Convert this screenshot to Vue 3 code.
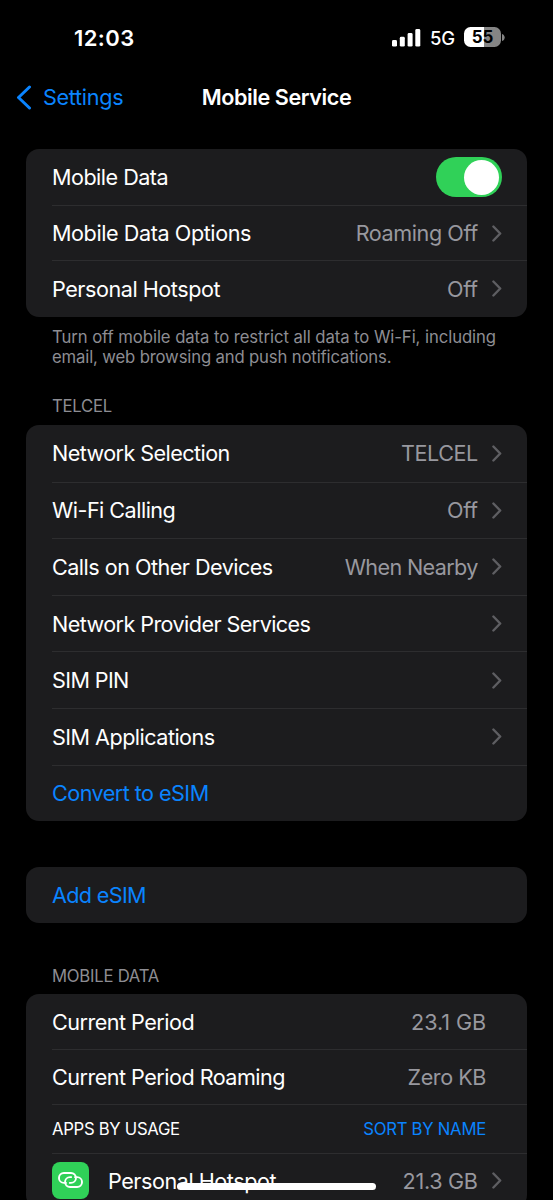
<script setup>
const groups = [
  {
    id: 'data',
    rows: [
      { label: 'Mobile Data', toggle: true, h: 56 },
      { label: 'Mobile Data Options', tracking: -0.42, value: 'Roaming Off', valueTracking: -0.43, chevron: true, h: 55 },
      { label: 'Personal Hotspot', tracking: -0.46, value: 'Off', chevron: true, h: 56.5 },
    ],
    footer: [
      { text: 'Turn off mobile data to restrict all data to Wi-Fi, including', tracking: -0.07 },
      { text: 'email, web browsing and push notifications.', tracking: -0.15 },
    ],
  },
  {
    id: 'carrier',
    header: 'TELCEL',
    rows: [
      { label: 'Network Selection', tracking: -0.57, value: 'TELCEL', valueTracking: -0.48, chevron: true },
      { label: 'Wi-Fi Calling', value: 'Off', chevron: true },
      { label: 'Calls on Other Devices', value: 'When Nearby', valueTracking: -0.64, chevron: true },
      { label: 'Network Provider Services', tracking: -0.58, chevron: true },
      { label: 'SIM PIN', tracking: -0.62, chevron: true },
      { label: 'SIM Applications', tracking: -0.53, chevron: true },
      { label: 'Convert to eSIM', tracking: -0.54, link: true },
    ],
  },
  { id: 'add', rows: [{ label: 'Add eSIM', tracking: -0.65, link: true, h: 56 }] },
  {
    id: 'usage',
    header: 'MOBILE DATA',
    rows: [
      { label: 'Current Period', value: '23.1 GB', valueTracking: -0.08, h: 55 },
      { label: 'Current Period Roaming', value: 'Zero KB', valueTracking: -0.45, h: 55 },
      { label: 'APPS BY USAGE', tracking: -0.3, action: 'SORT BY NAME', small: true, h: 48.7 },
      { label: 'Personal Hotspot', tracking: -0.46, value: '21.3 GB', chevron: true, icon: true, h: 55.2 },
    ],
  },
]
</script>

<template>
  <div class="screen">
    <header class="status">
      <span class="time">12:03</span>
      <div class="indicators">
        <svg class="signal" width="29" height="18" viewBox="0 0 29 18">
          <rect x="0" y="11" width="5" height="6.6" rx="1.4" />
          <rect x="7.8" y="7.8" width="5" height="9.8" rx="1.4" />
          <rect x="15.6" y="4" width="5" height="13.6" rx="1.4" />
          <rect x="23.3" y="0" width="5" height="17.6" rx="1.4" />
        </svg>
        <span class="network">5G</span>
        <div class="battery"><span>55</span></div>
        <svg class="cap" width="3" height="7" viewBox="0 0 3 7"><path d="M0 0C3.6 1 3.6 6 0 7Z" /></svg>
      </div>
    </header>

    <nav class="nav">
      <div class="back">
        <svg width="16" height="25" viewBox="0 0 16 25"><path d="M13.5 2 2.5 12.5 13.5 23" /></svg>
        <span>Settings</span>
      </div>
      <h1>Mobile Service</h1>
    </nav>

    <section v-for="g in groups" :key="g.id" :class="['group', g.id]">
      <h2 v-if="g.header">{{ g.header }}</h2>
      <div class="card">
        <div
          v-for="r in g.rows"
          :key="r.label"
          :class="['row', { small: r.small, plain: !r.chevron && (r.value || r.action) }]"
          :style="{ height: (r.h || 56.62) + 'px' }"
        >
          <span v-if="r.icon" class="icon">
            <svg width="25" height="16" viewBox="0 0 25 16">
              <path d="M8 10.9H5.9a4.95 4.95 0 0 1 0-9.9H13a4.95 4.95 0 0 1 0 9.9h-1.2" />
              <path d="M17 5.1h2.1a4.95 4.95 0 0 1 0 9.9H12a4.95 4.95 0 0 1 0-9.9h1.2" />
            </svg>
          </span>
          <span :class="['label', { link: r.link }]" :style="{ letterSpacing: (r.tracking ?? -0.52) + 'px' }">{{ r.label }}</span>
          <span v-if="r.value" class="value" :style="{ letterSpacing: (r.valueTracking ?? -0.3) + 'px' }">{{ r.value }}</span>
          <span v-if="r.action" class="link action">{{ r.action }}</span>
          <span v-if="r.toggle" class="toggle"><i></i></span>
          <svg v-if="r.chevron" class="chevron" width="10" height="17" viewBox="0 0 10 17">
            <path d="M1.4 1.5 8.2 8.5 1.4 15.5" />
          </svg>
        </div>
      </div>
      <p v-if="g.footer">
        <span v-for="line in g.footer" :key="line.text" :style="{ letterSpacing: line.tracking + 'px' }">{{ line.text }}</span>
      </p>
    </section>
    <div class="home-bar"></div>
  </div>
</template>

<style>
body { background: #000; }
</style>

<style scoped>
.screen {
  position: relative;
  width: 553px;
  height: 1200px;
  overflow: hidden;
  box-sizing: border-box;
  background: #000;
  color: #fff;
  font-family: Inter, "Liberation Sans", sans-serif;
  font-size: 21.6px;
  letter-spacing: -0.3px;
}
.status {
  height: 75px;
  display: flex;
  align-items: center;
  justify-content: space-between;
  padding: 0 48px 0 74px;
}
.time { font-size: 22px; font-weight: 600; letter-spacing: 0.4px; }
.indicators { display: flex; align-items: center; }
.signal { fill: #fff; margin-right: 9px; }
.network { font-size: 18.5px; font-weight: 500; letter-spacing: -0.3px; width: 34px; }
.battery {
  width: 37px;
  height: 20px;
  margin-bottom: 1px;
  border-radius: 6.5px;
  background: linear-gradient(90deg, #fff 55%, #858585 55%);
  color: #000;
  font-size: 17px;
  font-weight: 700;
  line-height: 20px;
  text-align: center;
  letter-spacing: 0;
}
.cap { margin-left: 1px; fill: #858585; }
.nav { height: 74px; position: relative; display: grid; justify-content: center; }
.nav h1 { margin: 11px 0 0; font-size: 21.6px; line-height: 22px; font-weight: 600; letter-spacing: -0.42px; }
.back { position: absolute; left: 16px; top: 9px; display: flex; align-items: center; gap: 11px; color: #0a84ff; }
.back svg { fill: none; stroke: #0a84ff; stroke-width: 3; stroke-linecap: round; stroke-linejoin: round; }
.group { padding: 0 26px; }
.card { overflow: hidden; border-radius: 13px; background: #1c1c1e; padding-left: 26px; }
.row { box-sizing: border-box; display: flex; align-items: center; padding-right: 25.3px; white-space: nowrap; }
.row + .row { border-top: 1px solid #2d2d2f; }
.label { flex: 1; }
.link { color: #0a84ff; }
.value { color: #98989f; }
.plain { padding-right: 41px; }
.small { font-size: 16.7px; }
.action { letter-spacing: -0.25px; }
.chevron { margin-left: 14px; fill: none; stroke: #5e5e62; stroke-width: 2.4; stroke-linecap: round; stroke-linejoin: round; }
.toggle { width: 66px; height: 40px; border-radius: 20px; background: #30d158; display: flex; align-items: center; justify-content: flex-end; }
.toggle i { width: 35px; height: 35px; border-radius: 50%; background: #fff; margin-right: 3px; }
p { margin: 10px 26px 0; font-size: 16.7px; line-height: 20.5px; color: #8d8d93; }
p span { display: block; white-space: nowrap; }
h2 { margin: 0 26px; font-size: 16.7px; line-height: 20px; font-weight: 400; letter-spacing: -0.25px; color: #8d8d93; }
.carrier { margin-top: 28.4px; }
.carrier h2 { margin-bottom: 9px; }
.usage h2 { margin-bottom: 8.4px; }
.add { margin-top: 45.6px; }
.usage { margin-top: 42.9px; }
.icon { width: 37px; height: 37px; border-radius: 8px; background: #30d158; display: grid; place-items: center; margin: -1px 19.3px 0 -0.3px; }
.icon svg { fill: none; stroke: #fff; stroke-width: 1.9; stroke-linecap: round; }
.home-bar { position: absolute; left: 177px; top: 1183px; width: 199px; height: 7px; border-radius: 4px; background: #fff; }
</style>
